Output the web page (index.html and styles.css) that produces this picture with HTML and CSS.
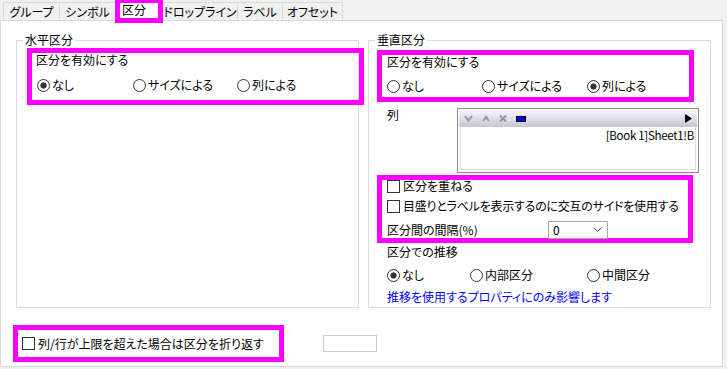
FILE: index.html
```html
<!DOCTYPE html>
<html lang="ja">
<head>
<meta charset="utf-8">
<title>区分</title>
<link rel="stylesheet" href="styles.css">
</head>
<body>
<div class="tabs">
  <div class="tab t1">グループ</div>
  <div class="tab t2">シンボル</div>
  <div class="tab sel">区分</div>
  <div class="tab t4">ドロップライン</div>
  <div class="tab t5">ラベル</div>
  <div class="tab t6">オフセット</div>
</div>
<div class="panel">
  <div class="groups">
    <fieldset class="group">
      <legend>水平区分</legend>
      <div class="hl hl-left">
        <div class="label">区分を有効にする</div>
        <div class="radios cols-a">
          <span class="opt"><span class="radio on"></span>なし</span>
          <span class="opt"><span class="radio"></span>サイズによる</span>
          <span class="opt"><span class="radio"></span>列による</span>
        </div>
      </div>
    </fieldset>
    <fieldset class="group">
      <legend>垂直区分</legend>
      <div class="hl hl-right">
        <div class="label tight">区分を有効にする</div>
        <div class="radios cols-b">
          <span class="opt"><span class="radio"></span>なし</span>
          <span class="opt"><span class="radio"></span>サイズによる</span>
          <span class="opt"><span class="radio on"></span>列による</span>
        </div>
      </div>
      <div class="col-row">
        <div class="col-label">列</div>
        <div class="listbox">
          <div class="lb-toolbar">
            <svg class="ic" width="9" height="7" viewBox="0 0 9 7"><path d="M1 1 L4.5 5.5 L8 1" stroke="#9495a4" stroke-width="2" fill="none"/></svg>
            <svg class="ic" width="8" height="7" viewBox="0 0 8 7"><path d="M1 6 L4 1.8 L7 6" stroke="#9495a4" stroke-width="2" fill="none"/></svg>
            <svg class="ic" width="8" height="7" viewBox="0 0 8 7"><path d="M1 0.5 L7 6.5 M7 0.5 L1 6.5" stroke="#9495a4" stroke-width="2" fill="none"/></svg>
            <svg class="ic" width="10" height="6" viewBox="0 0 10 6"><rect x="0.5" y="0.5" width="9" height="5" fill="#0000ff" stroke="#000"/></svg>
            <span class="spacer"></span>
            <svg class="ic" width="7" height="9" viewBox="0 0 7 9"><path d="M0 0 L7 4.5 L0 9 Z" fill="#000"/></svg>
          </div>
          <div class="lb-item">[Book 1]Sheet1!B</div>
        </div>
      </div>
      <div class="hl hl-mid">
        <div class="chk-row"><span class="check"></span>区分を重ねる</div>
        <div class="chk-row long"><span class="check"></span>目盛りとラベルを表示するのに交互のサイドを使用する</div>
        <div class="gap-row">
          <span class="gap-label">区分間の間隔(%)</span>
          <span class="combo"><span class="combo-val">0</span><svg width="9" height="5" viewBox="0 0 9 5"><path d="M0.5 0.5 L4.5 4.5 L8.5 0.5" stroke="#555" fill="none"/></svg></span>
        </div>
      </div>
      <div class="plain-label">区分での推移</div>
      <div class="radios cols-c">
        <span class="opt"><span class="radio on"></span>なし</span>
        <span class="opt"><span class="radio"></span>内部区分</span>
        <span class="opt"><span class="radio"></span>中間区分</span>
      </div>
      <div class="note">推移を使用するプロパティにのみ影響します</div>
    </fieldset>
  </div>
  <div class="bottom">
    <div class="hl hl-bottom">
      <span class="check"></span>列/行が上限を超えた場合は区分を折り返す
    </div>
    <span class="small-input"></span>
  </div>
</div>
</body>
</html>
```
FILE: styles.css
```css
* { box-sizing: border-box; }
html, body { margin: 0; padding: 0; }
body {
  width: 727px;
  height: 369px;
  overflow: hidden;
  background: #f0f0f0;
  font-family: "Noto Sans CJK JP", "Noto Sans", sans-serif;
  font-feature-settings: "palt";
  font-size: 12px;
  line-height: 14px;
  color: #000;
}

/* tabs */
.tabs {
  display: flex;
  align-items: flex-start;
  height: 20px;
  padding-left: 3px;
}
.tab {
  height: 18px;
  margin-top: 2px;
  margin-left: -1px;
  border: 1px solid #d9d9d9;
  border-bottom: none;
  background: #f0f0f0;
  text-align: center;
  line-height: 17px;
  white-space: nowrap;
}
.t1 { width: 57px; margin-left: 0; }
.t2 { width: 57px; }
.t4 { width: 76px; }
.t5 { width: 46px; }
.t6 { width: 61px; }
.sel {
  width: 48px;
  height: 25px;
  margin-top: -2px;
  border: 5px solid #ff00ff;
  background: #fff;
  text-align: left;
  padding-left: 2px;
  line-height: 14px;
  position: relative;
  z-index: 1;
}

/* panel */
.panel {
  width: 723px;
  height: 347px;
  background: #fff;
  border: 1px solid #d9d9d9;
  padding-top: 12px;
}
.groups {
  display: flex;
  gap: 9px;
  padding-left: 15px;
}
.group {
  width: 343px;
  height: 275px;
  margin: 0;
  padding: 1px 0 0 0;
  border: 1px solid #dcdcdc;
  min-width: 0;
}
.group legend {
  margin-left: 6px;
  padding: 0 2px;
  line-height: 14px;
}

/* magenta highlight boxes */
.hl { border: 5px solid #ff00ff; }
.hl-left {
  margin-left: 10px;
  width: 337px;
  padding: 0 0 8px 4px;
}
.hl-right {
  margin-left: 8px;
  margin-top: 2px;
  width: 317px;
  padding: 1px 0 4px 5px;
}
.label.tight { line-height: 12px; }
.radios {
  display: grid;
  margin-top: 11px;
  height: 14px;
}
.hl-left .radios { margin-left: 1px; }
.cols-a { grid-template-columns: 96px 104px auto; }
.cols-b { grid-template-columns: 95px 105px auto; }
.cols-c { grid-template-columns: 83px 117px auto; margin: 9px 0 0 18px; }
.opt {
  display: flex;
  align-items: center;
  gap: 2px;
  white-space: nowrap;
}
.radio {
  flex: none;
  width: 13px;
  height: 13px;
  border: 1px solid #333;
  border-radius: 50%;
  background: #fff;
}
.radio.on { background: radial-gradient(circle, #333 0 2.8px, #fff 3.4px); }

/* column list */
.col-row {
  display: flex;
  margin-top: 6px;
  padding-left: 18px;
}
.col-label { width: 70px; }
.listbox {
  width: 242px;
  height: 65px;
  border: 1px solid #8a8a8a;
  padding: 1px;
  box-shadow: inset 0 0 0 2px #fff, inset 0 0 0 3px #dcdcdc;
}
.lb-toolbar {
  display: flex;
  align-items: center;
  height: 17px;
  padding: 0 5px;
  gap: 9px;
  background: linear-gradient(#f7f7fa, #c4c5d3);
}
.lb-toolbar .spacer { flex: 1; }
.ic { display: block; flex: none; }
.lb-item {
  text-align: right;
  padding-right: 3px;
  margin-top: 2px;
  font-size: 11.5px;
  letter-spacing: -0.3px;
  line-height: 13px;
}

/* middle highlight */
.hl-mid {
  margin: 2px 0 0 8px;
  width: 316px;
  height: 68px;
  padding: 0 0 0 5px;
  display: flex;
  flex-direction: column;
}
.chk-row {
  display: flex;
  align-items: center;
  gap: 3px;
  height: 12px;
  white-space: nowrap;
}
.chk-row + .chk-row { margin-top: 8px; }
.chk-row.long { letter-spacing: -0.25px; }
.check {
  flex: none;
  width: 13px;
  height: 13px;
  border: 1px solid #333;
  background: #fff;
}
.gap-row {
  display: flex;
  align-items: center;
  height: 17px;
  margin-top: 9px;
}
.gap-label { width: 161px; }
.combo {
  display: flex;
  align-items: center;
  justify-content: space-between;
  width: 60px;
  height: 18px;
  border: 1px solid #a6a6a6;
  background: #fff;
  padding: 0 5px 0 4px;
}

.plain-label { margin: 2px 0 0 18px; }
.note {
  margin: 8px 0 0 18px;
  color: #0000ff;
}

/* bottom row */
.bottom {
  display: flex;
  align-items: center;
  margin-top: 17px;
  padding-left: 12px;
}
.hl-bottom {
  width: 271px;
  height: 37px;
  display: flex;
  align-items: center;
  gap: 3px;
  padding-left: 4px;
  white-space: nowrap;
}
.small-input {
  margin-left: 39px;
  width: 54px;
  height: 17px;
  border: 1px solid #cccccc;
  background: #fff;
}
```
